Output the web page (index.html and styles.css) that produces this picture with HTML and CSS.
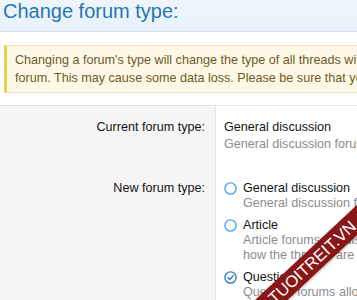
FILE: index.html
```html
<!DOCTYPE html>
<html lang="en">
<head>
  <meta charset="UTF-8" />
  <meta name="viewport" content="width=device-width, initial-scale=1.0"/>
  <title>Change forum type</title>
  <link rel="stylesheet" href="styles.css">
</head>
<body>

  <div class="page-header">
    <h1 class="page-title">Change forum type:</h1>
  </div>

  <div class="notice">
    Changing a forum's type will change the type of all threads within this forum. This may cause some data loss. Please be sure that you want this.
  </div>

  <form class="form-block">
    <dl class="form-row">
      <dt>Current forum type:</dt>
      <dd>
        <div class="value">General discussion</div>
        <div class="hint">General discussion forums allow users to start threads about any topic.</div>
      </dd>
    </dl>
    <dl class="form-row">
      <dt>New forum type:</dt>
      <dd>
        <ul class="choices">
          <li class="choice">
            <svg class="radio" width="13" height="13" viewBox="0 0 13 13"><circle cx="6.5" cy="6.5" r="5.6" fill="#fff" stroke="#4aa7ea" stroke-width="1.4"/></svg>
            <div>
              <div class="choice-label">General discussion</div>
              <div class="hint">General discussion forums allow users to start threads about any topic.</div>
            </div>
          </li>
          <li class="choice">
            <svg class="radio" width="13" height="13" viewBox="0 0 13 13"><circle cx="6.5" cy="6.5" r="5.6" fill="#fff" stroke="#4aa7ea" stroke-width="1.4"/></svg>
            <div>
              <div class="choice-label">Article</div>
              <div class="hint">Article forums will display the first post more prominently and can change how the threads are listed.</div>
            </div>
          </li>
          <li class="choice">
            <svg class="radio" width="13" height="13" viewBox="0 0 13 13"><circle cx="6.5" cy="6.5" r="5.6" fill="#fff" stroke="#2f7cc0" stroke-width="1.4"/><path d="M3.9 6.7 L5.8 8.5 L9.2 4.8" fill="none" stroke="#2f7cc0" stroke-width="1.4" stroke-linecap="round" stroke-linejoin="round"/></svg>
            <div>
              <div class="choice-label">Question</div>
              <div class="hint">Question forums allow users to ask questions and mark the best answer.</div>
            </div>
          </li>
        </ul>
      </dd>
    </dl>
  </form>

  <div class="watermark">TUOITREIT.VN</div>

</body>
</html>
```

FILE: styles.css
```css
html, body {
  overflow: hidden;
}

body {
  margin: 0;
  width: 670px;
  font-family: "Liberation Sans", Arial, sans-serif;
  font-size: 12.6px;
  color: #141414;
}

.page-header {
  background: linear-gradient(#eef5fc, #e8f1fa);
  border-bottom: 1px solid #d7e3ef;
  padding: 0 3px 8px;
}

.page-title {
  margin: 0;
  font-size: 20px;
  font-weight: normal;
  line-height: 23px;
  color: #2577b1;
}

.notice {
  max-width: 440px;
  box-sizing: border-box;
  margin: 13px 4px 12px;
  padding: 5px 8px;
  background: #fdf9e6;
  border: 1px solid #ece3b8;
  border-left: 3px solid #e3d550;
  color: #6c5a2c;
  line-height: 18px;
}

.form-block {
  border-top: 1px solid #e2e2e2;
}

.form-row {
  display: flex;
  margin: 0;
}

.form-row dt {
  flex: none;
  width: 216px;
  box-sizing: border-box;
  padding: 13px 10px 15px 0;
  text-align: right;
  line-height: 16px;
  background: #f5f5f5;
  border-right: 1px solid #e4e4e4;
}

.form-row dd {
  flex: 1;
  margin: 0;
  padding: 13px 8px 15px 8px;
  line-height: 16px;
}

.hint {
  margin-top: 2px;
  line-height: 15px;
  color: #8c8c8c;
}

.choices {
  list-style: none;
  margin: 0;
  padding: 0;
}

.choice {
  display: grid;
  grid-template-columns: 19px 1fr;
}

.choice + .choice {
  margin-top: 6px;
}

.choice .hint {
  margin-top: 0;
}

.radio {
  margin-top: 2px;
}

.watermark {
  position: absolute;
  left: 192px;
  top: 251px;
  width: 240px;
  height: 22px;
  line-height: 22px;
  background: #8a1717;
  color: #fff;
  font-size: 16.5px;
  text-align: center;
  transform: rotate(-43deg);
  box-shadow: 0 1px 3px rgba(0,0,0,0.3);
}
```
